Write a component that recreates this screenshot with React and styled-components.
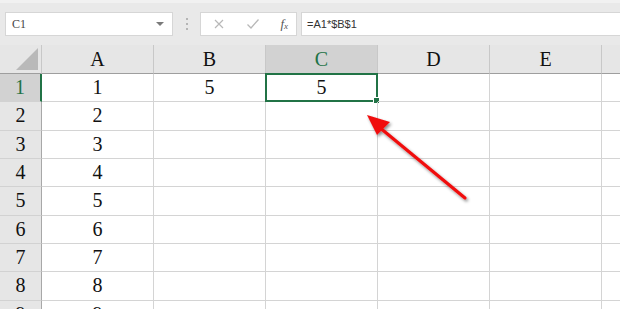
import React from "react"
import styled, { createGlobalStyle } from "styled-components"

const GlobalStyle = createGlobalStyle`
  html, body {
    margin: 0;
    padding: 0;
    background: #ffffff;
  }
  #root {
    width: 620px;
    height: 309px;
    overflow: hidden;
  }
`

const columns = ["A", "B", "C", "D", "E", ""]
const rows = [
    { n: 1, a: "1", b: "5", c: "5" },
    { n: 2, a: "2" },
    { n: 3, a: "3" },
    { n: 4, a: "4" },
    { n: 5, a: "5" },
    { n: 6, a: "6" },
    { n: 7, a: "7" },
    { n: 8, a: "8" },
    { n: 9, a: "9" },
]

const App = () => {
    return (
        <Sheet>
            <GlobalStyle />
            <Toolbar>
                <NameBox>
                    <NameText>C1</NameText>
                    <Caret />
                </NameBox>
                <Dots>
                    <span /><span /><span />
                </Dots>
                <FxBox>
                    <svg width="12" height="12" viewBox="0 0 12 12">
                        <path d="M2 2 L10 10 M10 2 L2 10" stroke="#b8b8b8" strokeWidth="1.2" fill="none" />
                    </svg>
                    <svg width="14" height="12" viewBox="0 0 14 12">
                        <path d="M1.5 6.5 L5 10 L12.5 1.5" stroke="#b8b8b8" strokeWidth="1.3" fill="none" />
                    </svg>
                    <FxLabel>f<sub>x</sub></FxLabel>
                </FxBox>
                <FormulaInput>=A1*$B$1</FormulaInput>
            </Toolbar>
            <Grid>
                <Corner>
                    <svg width="22" height="22" viewBox="0 0 22 22">
                        <polygon points="22,0 22,22 0,22" fill="#b9b9b9" />
                    </svg>
                </Corner>
                {columns.map((c, i) => (
                    <ColHeader key={i} $selected={c === "C"}>{c}</ColHeader>
                ))}
                {rows.map(r => (
                    <React.Fragment key={r.n}>
                        <RowHeader $selected={r.n === 1}>{r.n}</RowHeader>
                        <Cell>{r.a}</Cell>
                        <Cell>{r.b || ""}</Cell>
                        <Cell>
                            {r.c || ""}
                            {r.n === 1 && <Selection><Handle /></Selection>}
                        </Cell>
                        <Cell />
                        <Cell />
                        <Cell />
                    </React.Fragment>
                ))}
            </Grid>
            <Arrow width="130" height="110" viewBox="0 0 130 110">
                <defs>
                    <filter id="shadow" x="-20%" y="-20%" width="140%" height="140%">
                        <feDropShadow dx="1.5" dy="2" stdDeviation="1.6" floodColor="#000" floodOpacity="0.45" />
                    </filter>
                </defs>
                <g filter="url(#shadow)">
                    <line x1="108" y1="96" x2="22" y2="25" stroke="#f01010" strokeWidth="3.2" strokeLinecap="round" />
                    <polygon points="10,13 33,20 20,33" fill="#f01010" />
                </g>
            </Arrow>
        </Sheet>
    )
}

export default App

const Sheet = styled.div
`
    position: relative;
    width: 620px;
    height: 309px;
    overflow: hidden;
    background: #ffffff;
    font-family: "Liberation Serif", "DejaVu Serif", serif;
`

const Toolbar = styled.div
`
    display: flex;
    align-items: center;
    height: 45px;
    box-sizing: border-box;
    padding: 0 0 0 5px;
    background: #e9e9e9;
    border-top: 3px solid #f1f1f1;
`

const NameBox = styled.div
`
    display: flex;
    align-items: center;
    justify-content: space-between;
    width: 168px;
    height: 24px;
    box-sizing: border-box;
    padding: 0 8px 0 6px;
    background: #ffffff;
    border: 1px solid #d6d6d6;
`

const NameText = styled.span
`
    font-family: "Liberation Serif", serif;
    font-size: 12px;
    color: #444;
`

const Caret = styled.span
`
    width: 0;
    height: 0;
    border-left: 4px solid transparent;
    border-right: 4px solid transparent;
    border-top: 4px solid #7a7a7a;
`

const Dots = styled.div
`
    display: flex;
    flex-direction: column;
    gap: 3px;
    width: 27px;
    align-items: center;

    span {
        width: 2px;
        height: 2px;
        background: #b5b5b5;
    }
`

const FxBox = styled.div
`
    display: flex;
    align-items: center;
    justify-content: space-between;
    width: 97px;
    height: 24px;
    box-sizing: border-box;
    padding: 0 8px 0 12px;
    background: #ffffff;
    border: 1px solid #d6d6d6;
`

const FxLabel = styled.span
`
    font-family: "Liberation Serif", serif;
    font-style: italic;
    font-size: 13px;
    color: #555;

    sub {
        font-size: 9px;
        vertical-align: -1px;
    }
`

const FormulaInput = styled.div
`
    flex: 1;
    height: 24px;
    box-sizing: border-box;
    margin-left: 4px;
    padding: 0 0 0 5px;
    display: flex;
    align-items: center;
    background: #ffffff;
    border: 1px solid #d6d6d6;
    border-right: none;
    font-family: "Liberation Sans", Arial, sans-serif;
    font-size: 11px;
    color: #333;
`

const Grid = styled.div
`
    display: grid;
    grid-template-columns: 42px repeat(6, 112px);
    grid-template-rows: 29px repeat(9, 28.33px);
`

const Corner = styled.div
`
    display: flex;
    align-items: flex-end;
    justify-content: flex-end;
    padding: 0 3px 3px 0;
    background: #e6e6e6;
    border-bottom: 1px solid #9e9e9e;
    border-right: 1px solid #c8c8c8;
`

const ColHeader = styled.div
`
    display: flex;
    align-items: flex-end;
    justify-content: center;
    padding-bottom: 2px;
    box-sizing: border-box;
    background: ${p => p.$selected ? "#d2d2d2" : "#e6e6e6"};
    color: ${p => p.$selected ? "#217346" : "#111"};
    border-right: 1px solid #c8c8c8;
    border-bottom: 1px solid ${p => p.$selected ? "#217346" : "#9e9e9e"};
    font-size: 20px;
    line-height: 24px;
`

const RowHeader = styled.div
`
    display: flex;
    align-items: center;
    justify-content: center;
    box-sizing: border-box;
    background: ${p => p.$selected ? "#d2d2d2" : "#e6e6e6"};
    color: ${p => p.$selected ? "#217346" : "#111"};
    border-right: ${p => p.$selected ? "2px solid #217346" : "1px solid #a8a8a8"};
    border-bottom: 1px solid #d2d2d2;
    font-size: 20px;
`

const Cell = styled.div
`
    position: relative;
    display: flex;
    align-items: center;
    justify-content: center;
    box-sizing: border-box;
    border-right: 1px solid #d4d4d4;
    border-bottom: 1px solid #d4d4d4;
    font-size: 20px;
    color: #111;
`

const Selection = styled.div
`
    position: absolute;
    left: -1px;
    top: -1px;
    right: -1px;
    bottom: -1px;
    border: 2px solid #217346;
    pointer-events: none;
`

const Handle = styled.div
`
    position: absolute;
    right: -4px;
    bottom: -4px;
    width: 5px;
    height: 5px;
    background: #217346;
    border: 1px solid #ffffff;
`

const Arrow = styled.svg
`
    position: absolute;
    left: 357px;
    top: 102px;
    overflow: visible;
`
